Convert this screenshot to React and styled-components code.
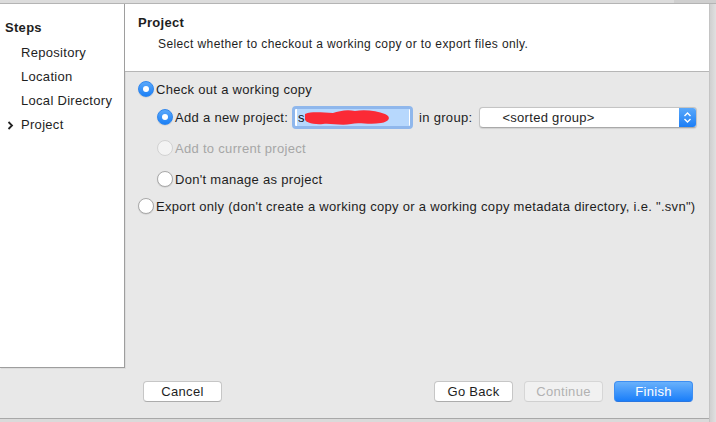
import React from "react";
import styled, { createGlobalStyle } from "styled-components";

const Global = createGlobalStyle`
  html, body { margin: 0; padding: 0; }
  body {
    width: 716px; height: 422px; overflow: hidden;
    font-family: "Helvetica Neue", "Liberation Sans", Arial, sans-serif;
    font-size: 13px; letter-spacing: 0.3px; color: #1e1e1e; background: #d9d9d9;
  }
`;

const Frame = styled.div`
  width: 716px; height: 422px;
  display: grid;
  grid-template-columns: 709px 7px;
  grid-template-rows: 4px 414px 4px;
`;

const TopStrip = styled.div`
  grid-column: 1 / 3;
  background: linear-gradient(to right, #dcdcdc 0, #dcdcdc 674px, #cfcfcf 674px);
  border-bottom: 1px solid #b4b4b4;
  box-sizing: border-box;
`;

const RightStrip = styled.div`
  grid-column: 2; grid-row: 2 / 4;
  background: linear-gradient(to right, #d0d0d0, #e0e0e0);
  border-left: 1px solid #c4c4c4;
  box-sizing: border-box;
`;

const BottomStrip = styled.div`
  grid-column: 1; grid-row: 3;
  background: #dadada;
  border-top: 1px solid #a8a8a8;
  box-sizing: border-box;
`;

const Window = styled.div`
  grid-column: 1; grid-row: 2;
  display: flex; flex-direction: column;
  background: #e8e8e8;
`;

const TopArea = styled.div`
  display: flex; height: 364px;
`;

const Sidebar = styled.div`
  width: 125px; background: #fff;
  border-right: 1px solid #9e9e9e; border-bottom: 1px solid #9e9e9e;
  box-shadow: 1px 1px 0 #dcdcdc;
  padding: 16px 0 0 0;
  box-sizing: border-box;
  display: flex; flex-direction: column;
`;

const StepsTitle = styled.div`
  font-weight: bold; padding-left: 5px; height: 20px; line-height: 16px;
  margin-bottom: 1px;
`;

const StepItem = styled.div`
  display: flex; align-items: center; height: 24px; line-height: 24px;
  padding-left: 7px;
`;

const Chevron = styled.span`
  width: 14px; display: inline-flex; align-items: center;
  font-weight: bold;
`;

const Main = styled.div`
  flex: 1; display: flex; flex-direction: column;
`;

const Header = styled.div`
  background: #fff; height: 68px;
  border-bottom: 1px solid #b6b6b6;
  box-sizing: border-box;
  padding: 10px 0 0 13px;
`;

const HeaderTitle = styled.div`
  font-weight: bold; height: 18px; line-height: 18px;
`;

const HeaderText = styled.div`
  padding-left: 20px; margin-top: 4px; font-size: 12px; letter-spacing: 0.4px; line-height: 16px;
`;

const Body = styled.div`
  padding: 7px 0 0 13px;
  display: flex; flex-direction: column;
`;

const Row = styled.div`
  display: flex; align-items: center; height: ${p => p.h || 28}px;
  padding-left: ${p => p.indent || 0}px;
  color: ${p => (p.disabled ? "#a6a6a6" : "#1e1e1e")};
`;

const RadioCircle = styled.span`
  width: 16px; height: 16px; border-radius: 50%; box-sizing: border-box;
  margin-right: 2px; flex: none;
  display: inline-flex; align-items: center; justify-content: center;
  background: ${p => (p.checked ? "linear-gradient(#5aa8fa, #1c80f6)" : p.disabled ? "#f3f3f3" : "#fff")};
  border: 1px solid ${p => (p.checked ? "#2f86ee" : p.disabled ? "#d2d2d2" : "#a9a9a9")};
  box-shadow: ${p => (p.disabled ? "none" : "0 0.5px 1px rgba(0,0,0,0.15)")};
  &::after {
    content: "";
    display: ${p => (p.checked ? "block" : "none")};
    width: 6px; height: 6px; border-radius: 50%; background: #fff;
  }
`;

const Radio = ({ checked, disabled, children }) => (
  <>
    <RadioCircle checked={checked} disabled={disabled} />
    <span>{children}</span>
  </>
);

const FieldWrap = styled.div`
  position: relative; margin-left: 4px;
  width: 121px; height: 23px; box-sizing: border-box;
  border: 3px solid #8fb7ec; border-radius: 4px;
  background: #fff;
  display: flex; align-items: center; padding-left: 2px;
`;

const Selected = styled.span`
  background: #b7d8fd; height: 17px; width: 111px; line-height: 17px;
  padding-left: 1px; color: #111;
`;

const Scribble = styled.svg`
  position: absolute; left: 8px; top: -1px;
`;

const GroupLabel = styled.span`
  margin-left: 6px;
`;

const Popup = styled.div`
  margin-left: 7px; width: 218px; height: 21px; box-sizing: border-box;
  border: 1px solid #c4c4c4; border-bottom-color: #a9a9a9; border-radius: 4px;
  background: #fff; display: flex; overflow: hidden;
  box-shadow: 0 0.5px 1px rgba(0,0,0,0.1);
`;

const PopupText = styled.div`
  flex: 1; padding-left: 22px; line-height: 19px;
`;

const PopupArrows = styled.div`
  width: 17px; background: linear-gradient(#5aa8fa, #1c7ef6);
  display: flex; align-items: center; justify-content: center;
`;

const Spacer = styled.div` flex: 1; `;

const Footer = styled.div`
  flex: 1; display: flex; align-items: flex-start;
  padding: 13px 0 0 143px;
`;

const Button = styled.div`
  width: 79px; height: 21px; box-sizing: border-box;
  border-radius: 4px; text-align: center; line-height: 19px;
  margin-left: ${p => p.ml || 0}px;
  background: ${p => (p.primary ? "linear-gradient(#69b1fb, #1a7ef9)" : p.disabled ? "#f1f1f1" : "#fff")};
  color: ${p => (p.primary ? "#fff" : p.disabled ? "#b2b2b2" : "#1e1e1e")};
  border: 1px solid ${p => (p.primary ? "#3d8ef2" : p.disabled ? "#d6d6d6" : "#c6c6c6")};
  border-bottom-color: ${p => (p.primary ? "#2a76e0" : p.disabled ? "#d0d0d0" : "#acacac")};
`;

export default function App() {
  return (
    <>
      <Global />
      <Frame>
        <TopStrip />
        <Window>
          <TopArea>
            <Sidebar>
              <StepsTitle>Steps</StepsTitle>
              <StepItem><Chevron /> Repository</StepItem>
              <StepItem><Chevron /> Location</StepItem>
              <StepItem><Chevron /> Local Directory</StepItem>
              <StepItem>
                <Chevron>
                  <svg width="7" height="9" viewBox="0 0 7 9">
                    <path d="M1.5 1 L5 4.5 L1.5 8" stroke="#222" strokeWidth="1.8" fill="none" />
                  </svg>
                </Chevron>
                Project
              </StepItem>
            </Sidebar>
            <Main>
              <Header>
                <HeaderTitle>Project</HeaderTitle>
                <HeaderText>Select whether to checkout a working copy or to export files only.</HeaderText>
              </Header>
              <Body>
                <Row h={20}><Radio checked>Check out a working copy</Radio></Row>
                <Row h={36} indent={19}>
                  <Radio checked>Add a new project:</Radio>
                  <FieldWrap>
                    <Selected>se</Selected>
                    <Scribble width="90" height="19" viewBox="0 0 90 19">
                      <path
                        d="M2 6 C10 3 20 5 30 5 C36 3 44 1 52 3 C62 1 74 3 82 6 C89 9 86 14 78 15 C66 17 56 14 48 16 C38 18 28 15 20 16 C10 17 1 14 2 10 Z"
                        fill="#fb2a36"
                      />
                    </Scribble>
                  </FieldWrap>
                  <GroupLabel>in group:</GroupLabel>
                  <Popup>
                    <PopupText>&lt;sorted group&gt;</PopupText>
                    <PopupArrows>
                      <svg width="9" height="13" viewBox="0 0 9 13">
                        <path d="M1.5 5 L4.5 2 L7.5 5 M1.5 8 L4.5 11 L7.5 8" stroke="#fff" strokeWidth="1.4" fill="none" />
                      </svg>
                    </PopupArrows>
                  </Popup>
                </Row>
                <Row h={26} indent={19} disabled><Radio disabled>Add to current project</Radio></Row>
                <Row h={36} indent={19}><Radio>Don't manage as project</Radio></Row>
                <Row h={18}><Radio>Export only (don't create a working copy or a working copy metadata directory, i.e. ".svn")</Radio></Row>
              </Body>
            </Main>
          </TopArea>
          <Footer>
            <Button>Cancel</Button>
            <Spacer />
            <Button ml={0}>Go Back</Button>
            <Button ml={11} disabled>Continue</Button>
            <Button ml={11} primary>Finish</Button>
            <div style={{ width: 16 }} />
          </Footer>
        </Window>
        <RightStrip />
        <BottomStrip />
      </Frame>
    </>
  );
}
